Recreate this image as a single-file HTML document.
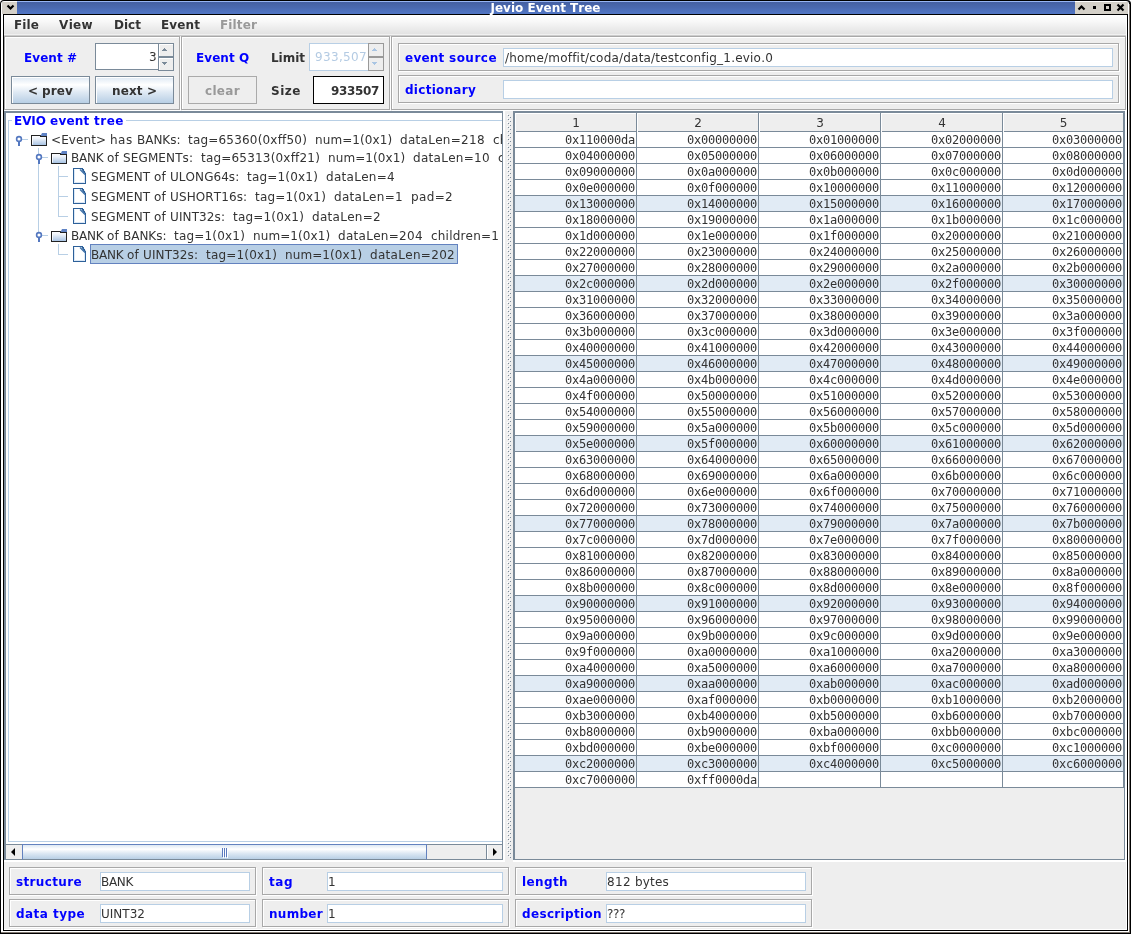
<!DOCTYPE html>
<html><head><meta charset="utf-8"><title>Jevio Event Tree</title>
<style>
*{box-sizing:border-box;margin:0;padding:0}
html,body{width:1131px;height:934px;overflow:hidden;background:#fff;}
body{position:relative;font-family:"DejaVu Sans","Liberation Sans",sans-serif;font-size:12px;color:#333;font-kerning:none;font-variant-ligatures:none;font-feature-settings:"kern" 0,"liga" 0,"clig" 0;}
.abs{position:absolute}
.b{font-weight:bold}
#titlebar{position:absolute;left:17px;top:1px;width:1058px;height:13px;background:linear-gradient(#97b5f3 0,#97b5f3 1px,#4560a2 1px,#4a69b0 50%,#5176c6 100%);}
#title{position:absolute;left:0;top:0;width:1091px;height:17px;text-align:center;color:#fff;font-weight:bold;font-size:12px;line-height:17px;}
#menubar{position:absolute;left:4px;top:15px;width:1122px;height:21px;background:linear-gradient(#fff 0,#f8f8f8 30%,#e2e2e2 19px,#f0f0f0 19px,#f0f0f0 20px,#ccc 20px);}
#menubar>span{position:absolute;top:0;line-height:21px;font-size:12px;font-weight:bold;color:#333}
.etch{position:absolute;border:1px solid #a8a8a8;box-shadow:inset 1px 1px 0 #fff, 1px 1px 0 #fff;}
.lbl{position:absolute;font-weight:bold;font-size:12px;white-space:nowrap;line-height:16px}
.blue{color:#0000ff}
.btn{position:absolute;border:1px solid #7a8a99;background:linear-gradient(#dde8f3 0,#fff 30%,#dde8f3 60%,#b8cfe5 100%);font-weight:bold;font-size:12px;text-align:center;color:#333;box-shadow:inset 1px 1px 0 #fff}
.btn.dis{background:#eee;color:#999;border-color:#aaa;box-shadow:none}
.sb{position:absolute;width:16px;height:14px;border:1px solid #7a8a99;background:#eee;box-shadow:inset 1px 1px 0 #fff}
.sb.dis{border-color:#999;box-shadow:none}
.tf{position:absolute;background:#fff;border:1px solid #b8cfe5;font-size:12px;white-space:nowrap;overflow:hidden;color:#333}
table{border-collapse:separate;border-spacing:0;table-layout:fixed;font-family:"DejaVu Sans Mono","Liberation Mono",monospace;font-size:12px;letter-spacing:-0.224px}
td{width:122px;height:16px;border-right:1px solid #7a8a99;border-bottom:1px solid #7a8a99;text-align:right;padding:1px 1px 0 0;line-height:14px;background:#fff;color:#333}
tr.hl td{background:#e1ebf5}
td:last-child{width:121px}
.hd{position:absolute;top:113px;height:19px;width:122px;background:#eee;box-shadow:inset 1px 0 0 #fff,inset -1px 0 0 #7a8a99,inset 0 1px 0 #fff,inset 0 -1px 0 #7a8a99;text-align:center;line-height:21px;font-size:12px}
.tl{position:absolute;background:#b8cfe5}
.tx{position:absolute;white-space:nowrap;font-size:12px;line-height:16px;color:#333}
</style></head><body style="will-change:transform">
<!-- window frame -->
<div class="abs" style="left:0;top:0;width:1131px;height:934px;background:#000;border-radius:4px 4px 0 0"></div>
<div class="abs" style="left:1px;top:1px;width:1128px;height:931px;background:#fff;border-radius:3px 3px 0 0"></div>
<div class="abs" style="left:1129px;top:4px;width:1px;height:929px;background:#807870"></div>
<div class="abs" style="left:1px;top:932px;width:1129px;height:1px;background:#807870"></div>
<div class="abs" style="left:3px;top:14px;width:1125px;height:917px;background:#000"></div>
<div class="abs" style="left:4px;top:15px;width:1123px;height:915px;background:#fff"></div>
<div class="abs" style="left:4px;top:15px;width:1122px;height:914px;background:#eee"></div>
<!-- title bar -->
<div class="abs" style="left:2px;top:2px;width:1126px;height:12px;background:#d4d0c8"></div>
<div id="titlebar"></div>
<div id="title">Jevio Event Tree</div>
<svg class="abs" style="left:0;top:0" width="20" height="15" viewBox="0 0 20 15"><path d="M7.5 5.5 L10.5 8.5 L13.5 5.5" fill="none" stroke="#000" stroke-width="2.2"/></svg>
<svg class="abs" style="left:1075px;top:0" width="56" height="15" viewBox="0 0 56 15"><path d="M3.5 9.5 L6.5 6.5 L9.5 9.5" fill="none" stroke="#000" stroke-width="2.2"/><rect x="18" y="6" width="3" height="3" fill="#000"/><rect x="30" y="5" width="5" height="5" fill="none" stroke="#000" stroke-width="2"/><path d="M42.5 4.5 L48.5 10.5 M48.5 4.5 L42.5 10.5" stroke="#000" stroke-width="2.2" fill="none"/></svg>
<div id="menubar">
<span style="left:10px"><span style="letter-spacing:0.109px">File</span></span><span style="left:55px"><span style="letter-spacing:0.344px">View</span></span><span style="left:110px"><span style="letter-spacing:0.019px">Dict</span></span><span style="left:157px"><span style="letter-spacing:0.113px">Event</span></span><span style="left:216px;color:#999"><span style="letter-spacing:0.131px">Filter</span></span>
</div>

<!-- top panel 1 -->
<div class="etch" style="left:4px;top:36px;width:176px;height:74px"></div>
<div class="lbl blue" style="left:24px;top:50px"><span style="letter-spacing:0.064px">Event&nbsp;</span><span style="letter-spacing:-0.055px">#</span></div>
<div class="tf" style="left:95px;top:43px;width:64px;height:27px;border-color:#7a8a99;text-align:right;line-height:26px;padding-right:1px"><span style="letter-spacing:0.365px">3</span></div>
<div class="sb" style="left:158px;top:43px"></div>
<div class="sb" style="left:158px;top:57px"></div>
<svg class="abs" style="left:162px;top:48px" width="5" height="3" viewBox="0 0 5 3"><path d="M2 0h1v1h1v1h1v1h-5v-1h1v-1h1z" fill="#7a8a99"/></svg>
<svg class="abs" style="left:162px;top:62px" width="5" height="3" viewBox="0 0 5 3"><path d="M0 0h5v1h-1v1h-1v1h-1v-1h-1v-1h-1z" fill="#7a8a99"/></svg>
<div class="btn" style="left:11px;top:76px;width:79px;height:28px;line-height:28px"><span style="letter-spacing:-0.116px">&lt;&nbsp;</span><span style="letter-spacing:0.133px">prev</span></div>
<div class="btn" style="left:95px;top:76px;width:79px;height:28px;line-height:28px"><span style="letter-spacing:0.133px">next&nbsp;</span><span style="letter-spacing:-0.055px">&gt;</span></div>

<!-- top panel 2 -->
<div class="etch" style="left:181px;top:36px;width:209px;height:74px"></div>
<div class="lbl blue" style="left:196px;top:50px"><span style="letter-spacing:0.064px">Event&nbsp;</span><span style="letter-spacing:-0.201px">Q</span></div>
<div class="lbl" style="left:271px;top:50px"><span style="letter-spacing:-0.023px">Limit</span></div>
<div class="lbl" style="left:271px;top:83px"><span style="letter-spacing:0.530px">Size</span></div>
<div class="btn dis" style="left:188px;top:76px;width:69px;height:28px;line-height:28px"><span style="letter-spacing:0.324px">clear</span></div>
<div class="tf" style="left:309px;top:43px;width:60px;height:28px;color:#b4cbe3;text-align:right;line-height:26px;padding-right:1px"><span style="letter-spacing:0.340px">933,507</span></div>
<div class="sb dis" style="left:368px;top:43px"></div>
<div class="sb dis" style="left:368px;top:57px"></div>
<svg class="abs" style="left:372px;top:48px" width="5" height="3" viewBox="0 0 5 3"><path d="M2 0h1v1h1v1h1v1h-5v-1h1v-1h1z" fill="#a9c5e3"/></svg>
<svg class="abs" style="left:372px;top:62px" width="5" height="3" viewBox="0 0 5 3"><path d="M0 0h5v1h-1v1h-1v1h-1v-1h-1v-1h-1z" fill="#a9c5e3"/></svg>
<div class="tf b" style="left:313px;top:76px;width:71px;height:28px;border-color:#000;text-align:right;line-height:28px;padding-right:4px"><span style="letter-spacing:-0.350px">933507</span></div>

<!-- top panel 3 -->
<div class="etch" style="left:391px;top:36px;width:735px;height:74px"></div>
<div class="etch" style="left:398px;top:43px;width:721px;height:28px"></div>
<div class="etch" style="left:398px;top:75px;width:721px;height:28px"></div>
<div class="lbl blue" style="left:405px;top:50px"><span style="letter-spacing:0.241px">event&nbsp;</span><span style="letter-spacing:0.483px">source</span></div>
<div class="lbl blue" style="left:405px;top:82px"><span style="letter-spacing:0.271px">dictionary</span></div>
<div class="tf" style="left:503px;top:48px;width:610px;height:19px;line-height:19px;padding-left:1px"><span style="letter-spacing:0.202px">/home/moffit/coda/data/testconfig_1.evio.0</span></div>
<div class="tf" style="left:503px;top:80px;width:610px;height:19px"></div>

<!-- tree pane -->
<div class="abs" style="left:4px;top:111px;width:501px;height:751px;background:#fff"></div>
<div class="abs" style="left:4px;top:111px;width:499px;height:749px;border:1px solid #7a8a99;border-left-width:2px;border-top-width:2px;background:#fff"></div>
<div class="abs" style="left:8px;top:120px;width:494px;height:722px;border:1px solid #b8cfe5;border-right:none"></div>
<div class="lbl blue" style="left:12px;top:113px;background:#fff;padding:0 2px"><span style="letter-spacing:-0.066px">EVIO&nbsp;</span><span style="letter-spacing:0.241px">event&nbsp;</span><span style="letter-spacing:0.517px">tree</span></div>
<div class="tl" style="left:22px;top:139px;width:6px;height:1px"></div>
<div class="tl" style="left:38px;top:148px;width:1px;height:88px"></div>
<div class="tl" style="left:42px;top:157px;width:6px;height:1px"></div>
<div class="tl" style="left:42px;top:235px;width:6px;height:1px"></div>
<div class="tl" style="left:58px;top:166px;width:1px;height:51px"></div>
<div class="tl" style="left:58px;top:176px;width:10px;height:1px"></div>
<div class="tl" style="left:58px;top:196px;width:10px;height:1px"></div>
<div class="tl" style="left:58px;top:216px;width:10px;height:1px"></div>
<div class="tl" style="left:58px;top:244px;width:1px;height:11px"></div>
<div class="tl" style="left:58px;top:254px;width:10px;height:1px"></div>
<svg class="abs" style="left:15px;top:135px" width="8" height="12" viewBox="0 0 8 12"><circle cx="4" cy="4" r="2.4" fill="#fff" stroke="#5478c0" stroke-width="1.6"/><rect x="3" y="6.6" width="2" height="4.4" fill="#5478c0"/></svg>
<svg class="abs" style="left:35px;top:153px" width="8" height="12" viewBox="0 0 8 12"><circle cx="4" cy="4" r="2.4" fill="#fff" stroke="#5478c0" stroke-width="1.6"/><rect x="3" y="6.6" width="2" height="4.4" fill="#5478c0"/></svg>
<svg class="abs" style="left:35px;top:231px" width="8" height="12" viewBox="0 0 8 12"><circle cx="4" cy="4" r="2.4" fill="#fff" stroke="#5478c0" stroke-width="1.6"/><rect x="3" y="6.6" width="2" height="4.4" fill="#5478c0"/></svg>
<svg class="abs" style="left:31px;top:133px" width="16" height="13" viewBox="0 0 16 13"><defs><linearGradient id="fg" x1="0" y1="0" x2="0" y2="1"><stop offset="0" stop-color="#fff"/><stop offset="0.3" stop-color="#eef3fa"/><stop offset="1" stop-color="#a3c0e2"/></linearGradient></defs><rect x="0.5" y="2.5" width="15" height="10" fill="url(#fg)" stroke="#222" shape-rendering="crispEdges"/><path d="M1.5 3.5 V11.5" stroke="#fff" stroke-opacity="0.8" fill="none"/><path d="M9.5 3 L11 0 H16 V3 Z" fill="#5f82c4"/><rect x="9" y="3" width="7" height="1" fill="#222" shape-rendering="crispEdges"/></svg>
<svg class="abs" style="left:51px;top:151px" width="16" height="13" viewBox="0 0 16 13"><defs><linearGradient id="fg" x1="0" y1="0" x2="0" y2="1"><stop offset="0" stop-color="#fff"/><stop offset="0.3" stop-color="#eef3fa"/><stop offset="1" stop-color="#a3c0e2"/></linearGradient></defs><rect x="0.5" y="2.5" width="15" height="10" fill="url(#fg)" stroke="#222" shape-rendering="crispEdges"/><path d="M1.5 3.5 V11.5" stroke="#fff" stroke-opacity="0.8" fill="none"/><path d="M9.5 3 L11 0 H16 V3 Z" fill="#5f82c4"/><rect x="9" y="3" width="7" height="1" fill="#222" shape-rendering="crispEdges"/></svg>
<svg class="abs" style="left:51px;top:229px" width="16" height="13" viewBox="0 0 16 13"><defs><linearGradient id="fg" x1="0" y1="0" x2="0" y2="1"><stop offset="0" stop-color="#fff"/><stop offset="0.3" stop-color="#eef3fa"/><stop offset="1" stop-color="#a3c0e2"/></linearGradient></defs><rect x="0.5" y="2.5" width="15" height="10" fill="url(#fg)" stroke="#222" shape-rendering="crispEdges"/><path d="M1.5 3.5 V11.5" stroke="#fff" stroke-opacity="0.8" fill="none"/><path d="M9.5 3 L11 0 H16 V3 Z" fill="#5f82c4"/><rect x="9" y="3" width="7" height="1" fill="#222" shape-rendering="crispEdges"/></svg>
<svg class="abs" style="left:73px;top:168px" width="13" height="16" viewBox="0 0 13 16"><path d="M0.5 0.5 H9.5 L12.5 5.5 V15.5 H0.5 Z" fill="#fff" stroke="#2d6099" shape-rendering="crispEdges"/><path d="M1.5 1.5 V14.5 H11.5 V6" fill="none" stroke="#dbe8f6"/><path d="M7 1.5 L12 6.5" fill="none" stroke="#3a6ea8" stroke-width="1.2"/><path d="M9 1 L12 5" fill="none" stroke="#2d6099" stroke-width="1.4"/></svg>
<svg class="abs" style="left:73px;top:188px" width="13" height="16" viewBox="0 0 13 16"><path d="M0.5 0.5 H9.5 L12.5 5.5 V15.5 H0.5 Z" fill="#fff" stroke="#2d6099" shape-rendering="crispEdges"/><path d="M1.5 1.5 V14.5 H11.5 V6" fill="none" stroke="#dbe8f6"/><path d="M7 1.5 L12 6.5" fill="none" stroke="#3a6ea8" stroke-width="1.2"/><path d="M9 1 L12 5" fill="none" stroke="#2d6099" stroke-width="1.4"/></svg>
<svg class="abs" style="left:73px;top:208px" width="13" height="16" viewBox="0 0 13 16"><path d="M0.5 0.5 H9.5 L12.5 5.5 V15.5 H0.5 Z" fill="#fff" stroke="#2d6099" shape-rendering="crispEdges"/><path d="M1.5 1.5 V14.5 H11.5 V6" fill="none" stroke="#dbe8f6"/><path d="M7 1.5 L12 6.5" fill="none" stroke="#3a6ea8" stroke-width="1.2"/><path d="M9 1 L12 5" fill="none" stroke="#2d6099" stroke-width="1.4"/></svg>
<svg class="abs" style="left:73px;top:246px" width="13" height="16" viewBox="0 0 13 16"><path d="M0.5 0.5 H9.5 L12.5 5.5 V15.5 H0.5 Z" fill="#fff" stroke="#2d6099" shape-rendering="crispEdges"/><path d="M1.5 1.5 V14.5 H11.5 V6" fill="none" stroke="#dbe8f6"/><path d="M7 1.5 L12 6.5" fill="none" stroke="#3a6ea8" stroke-width="1.2"/><path d="M9 1 L12 5" fill="none" stroke="#2d6099" stroke-width="1.4"/></svg>
<div class="abs" style="left:6px;top:122px;width:496px;height:719px;overflow:hidden">
<div class="tx" style="left:45px;top:9px;height:18px;line-height:18px;"><span style="letter-spacing:0.087px">&lt;Event&gt;&nbsp;</span><span style="letter-spacing:0.494px">has&nbsp;</span><span style="letter-spacing:-0.026px">BANKs:&nbsp;&nbsp;</span><span style="letter-spacing:0.192px">tag=65360(0xff50)&nbsp;&nbsp;</span><span style="letter-spacing:0.087px">num=1(0x1)&nbsp;&nbsp;</span><span style="letter-spacing:0.285px">dataLen=218&nbsp;&nbsp;</span><span style="letter-spacing:0.190px">children=2</span></div>
<div class="tx" style="left:65px;top:27px;height:18px;line-height:18px;"><span style="letter-spacing:-0.220px">BANK&nbsp;</span><span style="letter-spacing:0.206px">of&nbsp;</span><span style="letter-spacing:0.121px">SEGMENTs:&nbsp;&nbsp;</span><span style="letter-spacing:0.192px">tag=65313(0xff21)&nbsp;&nbsp;</span><span style="letter-spacing:0.087px">num=1(0x1)&nbsp;&nbsp;</span><span style="letter-spacing:0.279px">dataLen=10&nbsp;&nbsp;</span><span style="letter-spacing:0.190px">children=3</span></div>
<div class="tx" style="left:85px;top:45px;height:20px;line-height:20px;"><span style="letter-spacing:0.056px">SEGMENT&nbsp;</span><span style="letter-spacing:0.206px">of&nbsp;</span><span style="letter-spacing:0.056px">ULONG64s:&nbsp;&nbsp;</span><span style="letter-spacing:0.189px">tag=1(0x1)&nbsp;&nbsp;</span><span style="letter-spacing:0.290px">dataLen=4</span></div>
<div class="tx" style="left:85px;top:65px;height:20px;line-height:20px;"><span style="letter-spacing:0.056px">SEGMENT&nbsp;</span><span style="letter-spacing:0.206px">of&nbsp;</span><span style="letter-spacing:0.106px">USHORT16s:&nbsp;&nbsp;</span><span style="letter-spacing:0.189px">tag=1(0x1)&nbsp;&nbsp;</span><span style="letter-spacing:0.271px">dataLen=1&nbsp;&nbsp;</span><span style="letter-spacing:0.345px">pad=2</span></div>
<div class="tx" style="left:85px;top:85px;height:20px;line-height:20px;"><span style="letter-spacing:0.056px">SEGMENT&nbsp;</span><span style="letter-spacing:0.206px">of&nbsp;</span><span style="letter-spacing:0.118px">UINT32s:&nbsp;&nbsp;</span><span style="letter-spacing:0.189px">tag=1(0x1)&nbsp;&nbsp;</span><span style="letter-spacing:0.290px">dataLen=2</span></div>
<div class="tx" style="left:65px;top:105px;height:18px;line-height:18px;"><span style="letter-spacing:-0.220px">BANK&nbsp;</span><span style="letter-spacing:0.206px">of&nbsp;</span><span style="letter-spacing:-0.026px">BANKs:&nbsp;&nbsp;</span><span style="letter-spacing:0.189px">tag=1(0x1)&nbsp;&nbsp;</span><span style="letter-spacing:0.087px">num=1(0x1)&nbsp;&nbsp;</span><span style="letter-spacing:0.285px">dataLen=204&nbsp;&nbsp;</span><span style="letter-spacing:0.190px">children=1</span></div>
<div class="tx" style="left:84px;top:122px;height:20px;line-height:20px;background:#b8cfe5;border:1px solid #6382bf;padding:0 2px 0 0;"><span style="letter-spacing:-0.220px">BANK&nbsp;</span><span style="letter-spacing:0.206px">of&nbsp;</span><span style="letter-spacing:0.118px">UINT32s:&nbsp;&nbsp;</span><span style="letter-spacing:0.189px">tag=1(0x1)&nbsp;&nbsp;</span><span style="letter-spacing:0.087px">num=1(0x1)&nbsp;&nbsp;</span><span style="letter-spacing:0.303px">dataLen=202</span></div>
</div>
<!-- scrollbar -->
<div class="abs" style="left:6px;top:844px;width:496px;height:15px;background:#eee;border-top:1px solid #7a8a99"></div>
<div class="abs" style="left:22px;top:844px;width:405px;height:16px;border:1px solid #6382bf;border-bottom-color:#7a8a99;background:linear-gradient(#dde8f3 0,#fff 30%,#dde8f3 60%,#b8cfe5 100%)"></div>
<div class="abs" style="left:486px;top:845px;width:1px;height:14px;background:#7a8a99"></div><div class="abs" style="left:487px;top:845px;width:1px;height:14px;background:#fff"></div>
<svg class="abs" style="left:6px;top:845px" width="16" height="15" viewBox="0 0 16 15"><path d="M9 3 L9 11 L5 7 Z" fill="#000"/></svg>
<svg class="abs" style="left:487px;top:845px" width="16" height="15" viewBox="0 0 16 15"><path d="M6 3 L6 11 L10 7 Z" fill="#000"/></svg>
<svg class="abs" style="left:220px;top:846px" width="10" height="13" viewBox="0 0 10 13"><path d="M2.5 2 V11 M4.5 2 V11 M6.5 2 V11" stroke="#5a7abf" stroke-width="1"/><path d="M3.5 3 V12 M5.5 3 V12 M7.5 3 V12" stroke="#fff" stroke-width="1"/></svg>

<!-- divider -->
<svg class="abs" style="left:505px;top:114px" width="8" height="744" viewBox="0 0 8 744"><defs><pattern id="dp" x="0" y="0" width="8" height="4" patternUnits="userSpaceOnUse"><rect x="2" y="0" width="1" height="1" fill="#fff"/><rect x="3" y="1" width="1" height="1" fill="#7a8a99"/><rect x="4" y="2" width="1" height="1" fill="#fff"/><rect x="5" y="3" width="1" height="1" fill="#7a8a99"/></pattern></defs><rect x="0" y="0" width="8" height="744" fill="url(#dp)"/></svg>

<!-- table -->
<div class="abs" style="left:513px;top:111px;width:614px;height:751px;background:#fff"></div>
<div class="abs" style="left:513px;top:111px;width:612px;height:749px;border:2px solid #7a8a99;border-right-width:1px;border-bottom-width:1px;background:#eee"></div>
<div class="hd" style="left:515px">1</div><div class="hd" style="left:637px">2</div><div class="hd" style="left:759px">3</div><div class="hd" style="left:881px">4</div><div class="hd" style="left:1003px;width:121px">5</div>
<div class="abs" style="left:515px;top:132px;">
<table>
<tr><td>0x110000da</td><td>0x00000000</td><td>0x01000000</td><td>0x02000000</td><td>0x03000000</td></tr>
<tr><td>0x04000000</td><td>0x05000000</td><td>0x06000000</td><td>0x07000000</td><td>0x08000000</td></tr>
<tr><td>0x09000000</td><td>0x0a000000</td><td>0x0b000000</td><td>0x0c000000</td><td>0x0d000000</td></tr>
<tr><td>0x0e000000</td><td>0x0f000000</td><td>0x10000000</td><td>0x11000000</td><td>0x12000000</td></tr>
<tr class="hl"><td>0x13000000</td><td>0x14000000</td><td>0x15000000</td><td>0x16000000</td><td>0x17000000</td></tr>
<tr><td>0x18000000</td><td>0x19000000</td><td>0x1a000000</td><td>0x1b000000</td><td>0x1c000000</td></tr>
<tr><td>0x1d000000</td><td>0x1e000000</td><td>0x1f000000</td><td>0x20000000</td><td>0x21000000</td></tr>
<tr><td>0x22000000</td><td>0x23000000</td><td>0x24000000</td><td>0x25000000</td><td>0x26000000</td></tr>
<tr><td>0x27000000</td><td>0x28000000</td><td>0x29000000</td><td>0x2a000000</td><td>0x2b000000</td></tr>
<tr class="hl"><td>0x2c000000</td><td>0x2d000000</td><td>0x2e000000</td><td>0x2f000000</td><td>0x30000000</td></tr>
<tr><td>0x31000000</td><td>0x32000000</td><td>0x33000000</td><td>0x34000000</td><td>0x35000000</td></tr>
<tr><td>0x36000000</td><td>0x37000000</td><td>0x38000000</td><td>0x39000000</td><td>0x3a000000</td></tr>
<tr><td>0x3b000000</td><td>0x3c000000</td><td>0x3d000000</td><td>0x3e000000</td><td>0x3f000000</td></tr>
<tr><td>0x40000000</td><td>0x41000000</td><td>0x42000000</td><td>0x43000000</td><td>0x44000000</td></tr>
<tr class="hl"><td>0x45000000</td><td>0x46000000</td><td>0x47000000</td><td>0x48000000</td><td>0x49000000</td></tr>
<tr><td>0x4a000000</td><td>0x4b000000</td><td>0x4c000000</td><td>0x4d000000</td><td>0x4e000000</td></tr>
<tr><td>0x4f000000</td><td>0x50000000</td><td>0x51000000</td><td>0x52000000</td><td>0x53000000</td></tr>
<tr><td>0x54000000</td><td>0x55000000</td><td>0x56000000</td><td>0x57000000</td><td>0x58000000</td></tr>
<tr><td>0x59000000</td><td>0x5a000000</td><td>0x5b000000</td><td>0x5c000000</td><td>0x5d000000</td></tr>
<tr class="hl"><td>0x5e000000</td><td>0x5f000000</td><td>0x60000000</td><td>0x61000000</td><td>0x62000000</td></tr>
<tr><td>0x63000000</td><td>0x64000000</td><td>0x65000000</td><td>0x66000000</td><td>0x67000000</td></tr>
<tr><td>0x68000000</td><td>0x69000000</td><td>0x6a000000</td><td>0x6b000000</td><td>0x6c000000</td></tr>
<tr><td>0x6d000000</td><td>0x6e000000</td><td>0x6f000000</td><td>0x70000000</td><td>0x71000000</td></tr>
<tr><td>0x72000000</td><td>0x73000000</td><td>0x74000000</td><td>0x75000000</td><td>0x76000000</td></tr>
<tr class="hl"><td>0x77000000</td><td>0x78000000</td><td>0x79000000</td><td>0x7a000000</td><td>0x7b000000</td></tr>
<tr><td>0x7c000000</td><td>0x7d000000</td><td>0x7e000000</td><td>0x7f000000</td><td>0x80000000</td></tr>
<tr><td>0x81000000</td><td>0x82000000</td><td>0x83000000</td><td>0x84000000</td><td>0x85000000</td></tr>
<tr><td>0x86000000</td><td>0x87000000</td><td>0x88000000</td><td>0x89000000</td><td>0x8a000000</td></tr>
<tr><td>0x8b000000</td><td>0x8c000000</td><td>0x8d000000</td><td>0x8e000000</td><td>0x8f000000</td></tr>
<tr class="hl"><td>0x90000000</td><td>0x91000000</td><td>0x92000000</td><td>0x93000000</td><td>0x94000000</td></tr>
<tr><td>0x95000000</td><td>0x96000000</td><td>0x97000000</td><td>0x98000000</td><td>0x99000000</td></tr>
<tr><td>0x9a000000</td><td>0x9b000000</td><td>0x9c000000</td><td>0x9d000000</td><td>0x9e000000</td></tr>
<tr><td>0x9f000000</td><td>0xa0000000</td><td>0xa1000000</td><td>0xa2000000</td><td>0xa3000000</td></tr>
<tr><td>0xa4000000</td><td>0xa5000000</td><td>0xa6000000</td><td>0xa7000000</td><td>0xa8000000</td></tr>
<tr class="hl"><td>0xa9000000</td><td>0xaa000000</td><td>0xab000000</td><td>0xac000000</td><td>0xad000000</td></tr>
<tr><td>0xae000000</td><td>0xaf000000</td><td>0xb0000000</td><td>0xb1000000</td><td>0xb2000000</td></tr>
<tr><td>0xb3000000</td><td>0xb4000000</td><td>0xb5000000</td><td>0xb6000000</td><td>0xb7000000</td></tr>
<tr><td>0xb8000000</td><td>0xb9000000</td><td>0xba000000</td><td>0xbb000000</td><td>0xbc000000</td></tr>
<tr><td>0xbd000000</td><td>0xbe000000</td><td>0xbf000000</td><td>0xc0000000</td><td>0xc1000000</td></tr>
<tr class="hl"><td>0xc2000000</td><td>0xc3000000</td><td>0xc4000000</td><td>0xc5000000</td><td>0xc6000000</td></tr>
<tr><td>0xc7000000</td><td>0xff0000da</td><td></td><td></td><td></td></tr>
</table>
</div>

<!-- bottom panels -->
<div class="etch" style="left:9px;top:867px;width:247px;height:28px"></div>
<div class="etch" style="left:9px;top:899px;width:247px;height:28px"></div>
<div class="etch" style="left:262px;top:867px;width:247px;height:28px"></div>
<div class="etch" style="left:262px;top:899px;width:247px;height:28px"></div>
<div class="etch" style="left:515px;top:867px;width:297px;height:28px"></div>
<div class="etch" style="left:515px;top:899px;width:297px;height:28px"></div>
<div class="lbl blue" style="left:16px;top:874px"><span style="letter-spacing:0.357px">structure</span></div>
<div class="lbl blue" style="left:16px;top:906px"><span style="letter-spacing:0.460px">data&nbsp;</span><span style="letter-spacing:0.428px">type</span></div>
<div class="lbl blue" style="left:269px;top:874px"><span style="letter-spacing:0.525px">tag</span></div>
<div class="lbl blue" style="left:269px;top:906px"><span style="letter-spacing:0.294px">number</span></div>
<div class="lbl blue" style="left:522px;top:874px"><span style="letter-spacing:0.389px">length</span></div>
<div class="lbl blue" style="left:522px;top:906px"><span style="letter-spacing:0.342px">description</span></div>
<div class="tf" style="left:100px;top:872px;width:150px;height:19px;line-height:19px;padding-left:0px"><span style="letter-spacing:-0.322px">BANK</span></div>
<div class="tf" style="left:100px;top:904px;width:150px;height:19px;line-height:19px;padding-left:0px"><span style="letter-spacing:0.017px">UINT32</span></div>
<div class="tf" style="left:327px;top:872px;width:176px;height:19px;line-height:19px;padding-left:0px"><span style="letter-spacing:0.365px">1</span></div>
<div class="tf" style="left:327px;top:904px;width:176px;height:19px;line-height:19px;padding-left:0px"><span style="letter-spacing:0.365px">1</span></div>
<div class="tf" style="left:606px;top:872px;width:200px;height:19px;line-height:19px;padding-left:0px"><span style="letter-spacing:0.320px">812&nbsp;</span><span style="letter-spacing:0.188px">bytes</span></div>
<div class="tf" style="left:606px;top:904px;width:200px;height:19px;line-height:19px;padding-left:0px"><span style="letter-spacing:-0.369px">???</span></div>
</body></html>
